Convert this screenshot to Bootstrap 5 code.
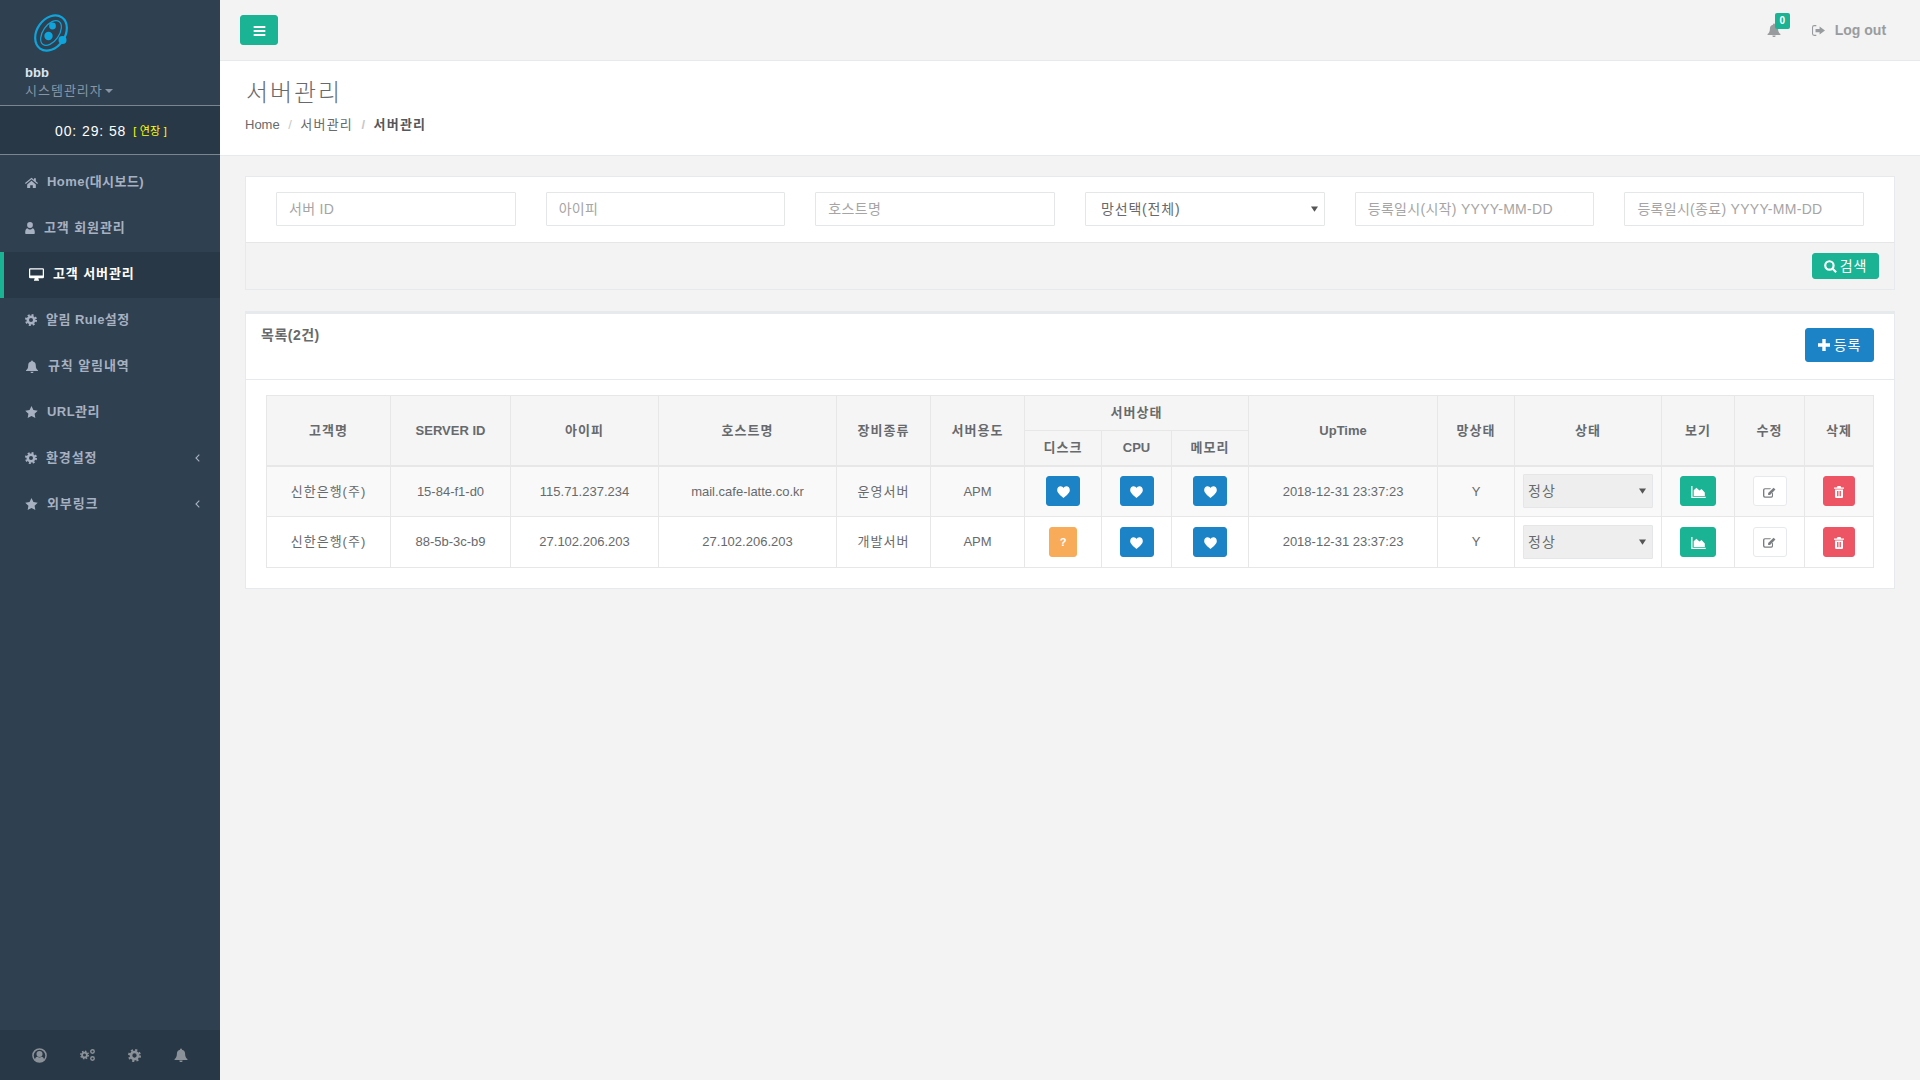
<!DOCTYPE html>
<html lang="ko">
<head>
    <meta charset="UTF-8">
    <meta name="viewport" content="width=device-width, initial-scale=1.0">
    <title>서버관리</title>
    <link href="https://cdn.jsdelivr.net/npm/bootstrap@5.3.2/dist/css/bootstrap.min.css" rel="stylesheet">
    <style>
        body {
            background-color: #f3f3f4;
            color: #676a6c;
            font-family: "Liberation Sans", "Noto Sans CJK KR", sans-serif;
            font-size: 13px;
            margin: 0;
            overflow: hidden;
        }
        .ico { fill: currentColor; flex: none; }

        /* sidebar */
        .side-panel { width: 220px; height: 1080px; background: #2f4050; color: #a7b1c2; flex: none; }
        .side-profile { height: 106px; padding: 14px 0 0 25px; border-bottom: 1px solid #7b858e; }
        .side-logo { display: block; margin: 0 0 13px 9px; }
        .side-name { color: #dfe4ed; font-weight: 700; line-height: 16px; }
        .side-role { color: #8795a5; line-height: 19px; letter-spacing: 1px; }
        .side-caret { display: inline-block; border: 4px solid transparent; border-top-color: #8795a5; border-bottom: 0; margin-left: 2px; vertical-align: 2px; }
        .side-timer { height: 49px; background: #293846; border-bottom: 1px solid #7b858e; color: #fff; font-size: 14px; padding: 3px 0 0 55px; letter-spacing: .9px; }
        .side-extend { color: #ffff00; font-size: 11px; margin-left: 7px; letter-spacing: .2px; }
        .side-menu { margin-top: 5px; }
        .side-menu .nav-link { height: 46px; padding: 0 22px 2px 25px; color: #a7b1c2; font-weight: 700; gap: 9px; letter-spacing: .45px; }
        .side-menu .nav-link .ko { letter-spacing: .9px; }
        .side-menu .nav-link.on { background: #293846; color: #fff; border-left: 4px solid #1ab394; }
        .side-menu .nav-link .ms-auto { margin-right: -2px; }
        .side-foot { height: 50px; background: #293846; color: #8b9198; padding-left: 32px; gap: 33px; }

        /* top bar */
        .top-bar { height: 61px; border-bottom: 1px solid #e7eaec; padding: 0 34px 0 20px; }
        .btn-teal { background: #1ab394; border-color: #1ab394; color: #fff; }
        .btn-blue { background: #1c84c6; border-color: #1c84c6; color: #fff; }
        .btn-amber { background: #f8ac59; border-color: #f8ac59; color: #fff; }
        .btn-rose { background: #ed5565; border-color: #ed5565; color: #fff; }
        .btn-toggle { width: 38px; height: 30px; padding: 0; border-radius: 3px; }
        .top-alert { color: #999c9e; margin-right: 31px; }
        .top-badge { top: -10px; left: 8px; width: 15px; height: 16px; line-height: 16px; padding: 0; font-size: 10px; border-radius: 2px; background: #1ab394; color: #fff; }
        .top-logout { color: #999c9e; font-weight: 700; font-size: 14px; gap: 10px; }

        /* page heading */
        .page-head { height: 95px; background: #fff; border-bottom: 1px solid #e7eaec; padding: 16px 25px 0; }
        .page-head h2 { font-size: 24px; font-weight: 300; line-height: 32px; margin: 0 0 7px 1px; letter-spacing: 1.9px; color: #676a6c; }
        .page-head .breadcrumb { margin: 0; --bs-breadcrumb-divider-color: #c8c8c8; --bs-breadcrumb-item-padding-x: 8.5px; line-height: 18px; }
        .page-head .breadcrumb-item { color: #676a6c; }
        .page-head .breadcrumb-item .ko { letter-spacing: 1.2px; }
        .page-head .breadcrumb-item.active { color: #55585a; font-weight: 700; }

        .page-body { padding: 20px 25px 0; }

        /* search box */
        .find-box { border: 1px solid #e7eaec; border-radius: 0; background: #fff; margin-bottom: 21px; }
        .find-fields { grid-template-columns: repeat(6, 1fr); padding: 15px 30px 16px 30px; gap: 30px; }
        .find-box .form-control, .find-box .form-select {
            height: 34px; border-radius: 1px; border-color: #e5e6e7; font-size: 14px; color: #676a6c; padding: 0 12px; letter-spacing: .3px;
        }
        .find-box .form-control::placeholder { color: #a5a5a5; }
        .find-box .form-select { padding-left: 15px; letter-spacing: .8px; }
        .find-foot { height: 47px; padding: 10px 15px 0; background: #f3f3f4; border-top: 1px solid #e5e6e7; border-radius: 0; text-align: right; }
        .btn-find { height: 26px; width: 67px; padding: 0; font-size: 14px; border-radius: 3px; gap: 3px; letter-spacing: 1px; }

        /* list box */
        .list-box { border: 1px solid #e7eaec; border-top-width: 3px; border-radius: 0; background: #fff; }
        .list-head { height: 66px; border-bottom: 1px solid #e7eaec; padding: 13px 20px 0 15px; }
        .list-title { color: #676a6c; font-size: 14px; font-weight: 700; line-height: 16px; letter-spacing: .5px; }
        .btn-add { height: 34px; width: 69px; padding: 0; margin-top: 1px; font-size: 14px; border-radius: 3px; gap: 4px; letter-spacing: 1px; }
        .list-body { padding: 15px 20px 20px; }

        .srv-table.table { table-layout: fixed; margin: 0; --bs-table-color: #676a6c; --bs-table-border-color: #e7e7e7; --bs-table-striped-bg: #f9f9f9; --bs-table-striped-color: #676a6c; }
        .srv-table.table > :not(caption) > * > * { padding: 0; text-align: center; vertical-align: middle; font-size: 13px; }
        .srv-table.table thead > * > * { --bs-table-bg: #f5f5f6; font-weight: 700; }
        .srv-table.table > * > * > .ko { letter-spacing: 1px; }
        .srv-table.table > thead { border-bottom: 2px solid #e7e7e7; }
        .srv-table .head-a { height: 35px; }
        .srv-table .head-b { height: 35px; }
        .srv-table tbody tr { height: 51px; }
        .btn-cell { height: 30px; width: 34px; padding: 0; border-radius: 3px; }
        .btn-cell.wq { width: 28px; font-size: 11px; font-weight: 700; line-height: 28px; }
        .btn-cell.wv { width: 36px; }
        .btn-cell.wd { width: 32px; }
        .btn-plain { background: #fff; border-color: #e7eaec; color: #7b7e80; }
        .srv-table .form-select { width: 130px; height: 34px; margin: 0 auto; padding: 0 0 0 4px; font-size: 14px; color: #676a6c; background-color: #eeeeee; border-color: #e5e6e7; border-radius: 1px; letter-spacing: 1px; }
        .form-select {
            background-image: url("data:image/svg+xml,%3csvg xmlns='http://www.w3.org/2000/svg' viewBox='0 0 8 6'%3e%3cpath fill='%23555' d='M0 0h8L4 6z'/%3e%3c/svg%3e");
            background-size: 7px 6px; background-position: right 6px center;
        }
    </style>
</head>
<body>

    <!-- icon set -->
    <svg width="0" height="0" class="position-absolute">
        <symbol id="i-home" viewBox="0 0 24 20"><path d="M12 1 0 11l1.400 1.700L12 4l10.600 8.700L24 11l-4-3.300V2h-3.400v2.900zM4 13.500V20h5.600v-5h4.800v5H20v-6.500L12 6.800z"/></symbol>
        <symbol id="i-user" viewBox="0 0 16 20"><circle cx="8" cy="5" r="4.800"/><path d="M1.500 20C.5 20 0 19.300 0 18c0-4 1-7 3.500-7.500C5 12 6.400 12.500 8 12.500s3-.5 4.500-2C15 11 16 14 16 18c0 1.300-.5 2-1.500 2z"/></symbol>
        <symbol id="i-desktop" viewBox="0 0 24 20"><path fill-rule="evenodd" d="M2 0h20a2 2 0 0 1 2 2v12a2 2 0 0 1-2 2h-7c0 1.500.5 2 1 2.800V20H8v-1.200c.5-.8 1-1.300 1-2.800H2a2 2 0 0 1-2-2V2a2 2 0 0 1 2-2zm0 2v9.500h20V2z"/></symbol>
        <symbol id="i-gear" viewBox="0 0 24 24"><circle cx="12" cy="12" r="6.500" fill="none" stroke="currentColor" stroke-width="5"/><circle cx="12" cy="12" r="10" fill="none" stroke="currentColor" stroke-width="4" stroke-dasharray="3.930 3.930"/></symbol>
        <symbol id="i-bell" viewBox="0 0 24 24"><path d="M12 1a1.700 1.700 0 0 1 1.700 1.800C17 3.500 19 6 19 9.500c0 5.500 1.500 7.500 4 9.500v1.500H1V19c2.500-2 4-4 4-9.500C5 6 7 3.500 10.300 2.800A1.700 1.700 0 0 1 12 1zM9.200 21.500h5.600a2.800 2.800 0 0 1-5.600 0z"/></symbol>
        <symbol id="i-star" viewBox="0 0 24 23"><path d="m12 0 3.700 7.800 8.300 1.100-6.100 5.900 1.500 8.200-7.400-4-7.400 4 1.500-8.200L0 8.900l8.300-1.100z"/></symbol>
        <symbol id="i-heart" viewBox="0 0 24 22"><path d="M12 22S2.500 14.500.8 10C-.8 5.200 2.200.5 6.700.5 9 .5 11 1.800 12 3.800 13 1.800 15 .5 17.300.5c4.500 0 7.500 4.700 5.900 9.500C21.500 14.500 12 22 12 22z"/></symbol>
        <symbol id="i-bars" viewBox="0 0 14 12"><path d="M0 0h14v2.400H0zM0 4.800h14v2.400H0zM0 9.600h14V12H0z"/></symbol>
        <symbol id="i-search" viewBox="0 0 24 24"><circle cx="10" cy="10" r="7.700" fill="none" stroke="currentColor" stroke-width="4"/><path d="m15 18 2.800-2.800 6 6L21 24z"/></symbol>
        <symbol id="i-plus" viewBox="0 0 12 12"><path d="M4.300 0h3.400v4.300H12v3.400H7.700V12H4.300V7.700H0V4.300h4.300z"/></symbol>
        <symbol id="i-chart" viewBox="0 0 24 20"><path d="M0 0h2v18h22v2H0z"/><path d="M4 16.500V7l4.500-4 5 4.500L17 5l5.500 6v5.500z"/></symbol>
        <symbol id="i-edit" viewBox="0 0 24 20"><path d="M3.500 2H15l-2 2H4a1.500 1.500 0 0 0-1.500 1.500v10.500A1.500 1.500 0 0 0 4 17.500h11a1.500 1.500 0 0 0 1.500-1.500v-4l2-2v6.500a3 3 0 0 1-3 3h-12a3.500 3.500 0 0 1-3.500-3.500V5.500A3.500 3.500 0 0 1 3.500 2z"/><path d="M19.500 1 23 4.500 13 14.500H9.500V11z"/></symbol>
        <symbol id="i-trash" viewBox="0 0 20 24"><path fill-rule="evenodd" d="M7 0h6l1.500 3H20v2.500H0V3h5.500zM2 7h16v14.500a2.500 2.500 0 0 1-2.500 2.500h-11A2.500 2.500 0 0 1 2 21.500zm4 3v10.500h1.800V10zm3.100 0v10.500h1.800V10zm3.100 0v10.500H14V10z"/></symbol>
        <symbol id="i-exit" viewBox="0 0 24 20"><path d="M8 0v2H4a2 2 0 0 0-2 2v12a2 2 0 0 0 2 2h4v2H4a4 4 0 0 1-4-4V4a4 4 0 0 1 4-4z"/><path d="M14 2.500 24 10 14 17.500v-4.500H6.500V7H14z"/></symbol>
        <symbol id="i-account" viewBox="0 0 24 24"><circle cx="12" cy="12" r="10.500" fill="none" stroke="currentColor" stroke-width="2.400"/><circle cx="12" cy="9.500" r="4.800"/><path d="M4.500 19c.5-3.500 2.500-5 4-5 1 .8 2.200 1.200 3.500 1.200s2.500-.4 3.500-1.200c1.500 0 3.500 1.500 4 5-2 2.500-4.500 3.500-7.500 3.500s-5.500-1-7.500-3.500z"/></symbol>
        <symbol id="i-cogs" viewBox="0 0 30 24"><g transform="translate(0 3) scale(.75)"><circle cx="12" cy="12" r="6.500" fill="none" stroke="currentColor" stroke-width="5"/><circle cx="12" cy="12" r="10" fill="none" stroke="currentColor" stroke-width="4" stroke-dasharray="3.930 3.930"/></g><circle cx="25" cy="5" r="3.500" fill="none" stroke="currentColor" stroke-width="2.800"/><circle cx="25" cy="19" r="3.500" fill="none" stroke="currentColor" stroke-width="2.800"/></symbol>
    </svg>

    <div class="d-flex">
        <!-- 사이드바 -->
        <aside class="side-panel d-flex flex-column">
            <div class="side-profile">
                <svg class="side-logo" width="34" height="38" viewBox="0 0 34 38">
                    <g fill="none" stroke="#0ea5dc" transform="rotate(35 17 19)">
                        <ellipse cx="17" cy="19" rx="14" ry="19" stroke-width="2.200"/>
                        <ellipse cx="17" cy="19" rx="8" ry="14" stroke-width="1.200"/>
                    </g>
                    <g fill="#0ea5dc">
                        <circle cx="14.500" cy="22" r="4.200"/>
                        <circle cx="18.500" cy="12" r="3.400"/>
                        <circle cx="28.500" cy="26" r="4"/>
                    </g>
                </svg>
                <div class="side-name">bbb</div>
                <div class="side-role">시스템관리자<span class="side-caret"></span></div>
            </div>
            <div class="side-timer d-flex align-items-center"><span>00: 29: 58</span><span class="side-extend">[ 연장 ]</span></div>
            <nav class="side-menu nav flex-column">
                <a class="nav-link d-flex align-items-center" href="#"><svg class="ico" width="13" height="11"><use href="#i-home"/></svg>Home(대시보드)</a>
                <a class="nav-link d-flex align-items-center" href="#"><svg class="ico" width="10" height="12"><use href="#i-user"/></svg><span class="ko">고객 회원관리</span></a>
                <a class="nav-link on d-flex align-items-center" href="#"><svg class="ico" width="15" height="13"><use href="#i-desktop"/></svg><span class="ko">고객 서버관리</span></a>
                <a class="nav-link d-flex align-items-center" href="#"><svg class="ico" width="12" height="12"><use href="#i-gear"/></svg>알림 Rule설정</a>
                <a class="nav-link d-flex align-items-center" href="#"><svg class="ico" width="14" height="13"><use href="#i-bell"/></svg><span class="ko">규칙 알림내역</span></a>
                <a class="nav-link d-flex align-items-center" href="#"><svg class="ico" width="13" height="12"><use href="#i-star"/></svg>URL관리</a>
                <a class="nav-link d-flex align-items-center" href="#"><svg class="ico" width="12" height="12"><use href="#i-gear"/></svg><span class="ko">환경설정</span><svg class="ms-auto" width="5" height="8" viewBox="0 0 5 8"><path d="M4.300.7 1 4l3.300 3.300" fill="none" stroke="currentColor" stroke-width="1.100"/></svg></a>
                <a class="nav-link d-flex align-items-center" href="#"><svg class="ico" width="13" height="12"><use href="#i-star"/></svg><span class="ko">외부링크</span><svg class="ms-auto" width="5" height="8" viewBox="0 0 5 8"><path d="M4.300.7 1 4l3.300 3.300" fill="none" stroke="currentColor" stroke-width="1.100"/></svg></a>
            </nav>
            <div class="side-foot mt-auto d-flex align-items-center">
                <svg class="ico" width="15" height="15"><use href="#i-account"/></svg>
                <svg class="ico" width="15" height="14"><use href="#i-cogs"/></svg>
                <svg class="ico" width="13" height="13"><use href="#i-gear"/></svg>
                <svg class="ico" width="14" height="14"><use href="#i-bell"/></svg>
            </div>
        </aside>

        <main class="flex-grow-1">
            <!-- 상단바 -->
            <div class="top-bar d-flex align-items-center justify-content-between">
                <button class="btn btn-teal btn-toggle" type="button"><svg class="ico" width="13" height="10"><use href="#i-bars"/></svg></button>
                <div class="d-flex align-items-center">
                    <a class="top-alert position-relative d-block" href="#"><svg class="ico d-block" width="14" height="14"><use href="#i-bell"/></svg><span class="top-badge badge position-absolute">0</span></a>
                    <a class="top-logout d-flex align-items-center text-decoration-none" href="#"><svg class="ico" width="13" height="11"><use href="#i-exit"/></svg>Log out</a>
                </div>
            </div>

            <!-- 제목 -->
            <div class="page-head">
                <h2>서버관리</h2>
                <ol class="breadcrumb">
                    <li class="breadcrumb-item">Home</li>
                    <li class="breadcrumb-item"><span class="ko">서버관리</span></li>
                    <li class="breadcrumb-item active"><span class="ko">서버관리</span></li>
                </ol>
            </div>

            <div class="page-body">
                <!-- 검색 -->
                <div class="find-box card">
                    <div class="find-fields d-grid">
                        <input class="form-control" type="text" placeholder="서버 ID">
                        <input class="form-control" type="text" placeholder="아이피">
                        <input class="form-control" type="text" placeholder="호스트명">
                        <select class="form-select"><option>망선택(전체)</option></select>
                        <input class="form-control" type="text" placeholder="등록일시(시작) YYYY-MM-DD">
                        <input class="form-control" type="text" placeholder="등록일시(종료) YYYY-MM-DD">
                    </div>
                    <div class="find-foot">
                        <button class="btn btn-teal btn-find d-inline-flex align-items-center justify-content-center" type="button"><svg class="ico" width="13" height="13"><use href="#i-search"/></svg>검색</button>
                    </div>
                </div>

                <!-- 목록 -->
                <div class="list-box card">
                    <div class="list-head d-flex justify-content-between align-items-start">
                        <span class="list-title">목록(2건)</span>
                        <button class="btn btn-blue btn-add d-inline-flex align-items-center justify-content-center" type="button"><svg class="ico" width="12" height="12"><use href="#i-plus"/></svg>등록</button>
                    </div>
                    <div class="list-body">
                        <table class="srv-table table table-bordered table-striped">
                            <colgroup>
                                <col width="124"><col width="120"><col width="148"><col width="178"><col width="94"><col width="94"><col width="77"><col width="70"><col width="77"><col width="189"><col width="77"><col width="147"><col width="73"><col width="70"><col width="69">
                            </colgroup>
                            <thead>
                                <tr class="head-a">
                                    <th rowspan="2" class="ko">고객명</th>
                                    <th rowspan="2">SERVER ID</th>
                                    <th rowspan="2" class="ko">아이피</th>
                                    <th rowspan="2" class="ko">호스트명</th>
                                    <th rowspan="2" class="ko">장비종류</th>
                                    <th rowspan="2" class="ko">서버용도</th>
                                    <th colspan="3" class="ko">서버상태</th>
                                    <th rowspan="2">UpTime</th>
                                    <th rowspan="2" class="ko">망상태</th>
                                    <th rowspan="2" class="ko">상태</th>
                                    <th rowspan="2" class="ko">보기</th>
                                    <th rowspan="2" class="ko">수정</th>
                                    <th rowspan="2" class="ko">삭제</th>
                                </tr>
                                <tr class="head-b">
                                    <th class="ko">디스크</th>
                                    <th>CPU</th>
                                    <th class="ko">메모리</th>
                                </tr>
                            </thead>
                            <tbody id="listaServidores"></tbody>
                        </table>
                    </div>
                </div>
            </div>
        </main>
    </div>

    <script src="https://cdn.jsdelivr.net/npm/bootstrap@5.3.2/dist/js/bootstrap.bundle.min.js"></script>
    <script>
        const servidores = [
            { cliente: "신한은행(주)", id: "15-84-f1-d0", ip: "115.71.237.234", host: "mail.cafe-latte.co.kr", tipo: "운영서버", disco: true },
            { cliente: "신한은행(주)", id: "88-5b-3c-b9", ip: "27.102.206.203", host: "27.102.206.203", tipo: "개발서버", disco: false }
        ];

        function btnCorazon() {
            return '<button class="btn btn-blue btn-cell" type="button"><svg class="ico" width="13" height="12"><use href="#i-heart"/></svg></button>';
        }

        document.getElementById("listaServidores").innerHTML = servidores.map(s => `
            <tr>
                <td class="ko">${s.cliente}</td>
                <td>${s.id}</td>
                <td>${s.ip}</td>
                <td>${s.host}</td>
                <td class="ko">${s.tipo}</td>
                <td>APM</td>
                <td>${s.disco ? btnCorazon() : '<button class="btn btn-amber btn-cell wq" type="button">?</button>'}</td>
                <td>${btnCorazon()}</td>
                <td>${btnCorazon()}</td>
                <td>2018-12-31 23:37:23</td>
                <td>Y</td>
                <td><select class="form-select" disabled><option>정상</option></select></td>
                <td><button class="btn btn-teal btn-cell wv" type="button"><svg class="ico" width="15" height="12"><use href="#i-chart"/></svg></button></td>
                <td><button class="btn btn-plain btn-cell" type="button"><svg class="ico" width="13" height="11"><use href="#i-edit"/></svg></button></td>
                <td><button class="btn btn-rose btn-cell wd" type="button"><svg class="ico" width="10" height="12"><use href="#i-trash"/></svg></button></td>
            </tr>`).join("");
    </script>
</body>
</html>
